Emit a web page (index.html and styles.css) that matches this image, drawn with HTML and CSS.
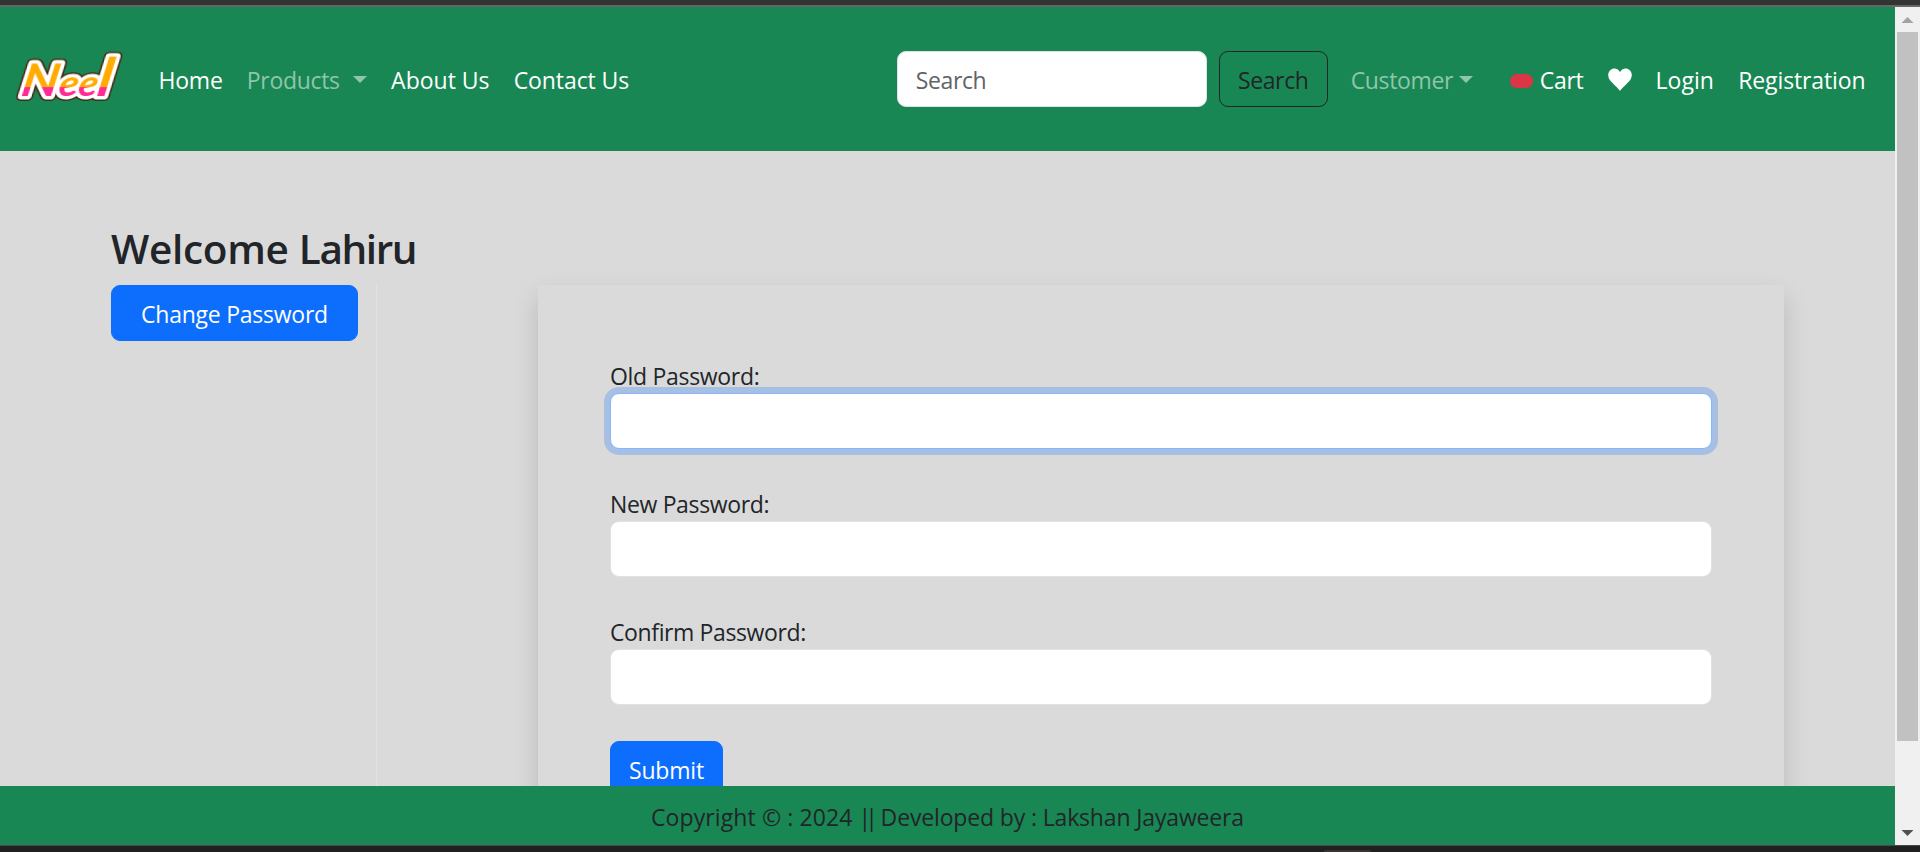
FILE: index.html
```html
<!DOCTYPE html>
<html lang="en">
<head>
<meta charset="utf-8">
<title>Change Password</title>
<link rel="stylesheet" href="styles.css">
</head>
<body>
<div class="window">
  <div class="strip-top"></div>
  <div class="viewport">
    <div class="page">
      <nav class="navbar">
        <svg class="logo" width="112" height="96" viewBox="0 0 112 96" role="img" aria-label="Neel">
          <defs>
            <linearGradient id="split" gradientUnits="userSpaceOnUse" x1="0" y1="0" x2="0" y2="96">
              <stop offset="0.593" stop-color="#ffab00"/>
              <stop offset="0.593" stop-color="#ff2a94"/>
            </linearGradient>
          </defs>
          <text class="logo-text" transform="translate(18.500 0) skewX(-10) scale(1.12 1)" x="-1" y="66" fill="url(#split)"><tspan font-size="46">N</tspan><tspan font-size="36" dx="0.5">ee</tspan><tspan font-size="53" dx="-0.5">l</tspan></text>
        </svg>
        <div class="links">
          <a class="link home">Home</a>
          <a class="link muted products">Products<span class="caret spaced"></span></a>
          <a class="link about">About Us</a>
          <a class="link contact">Contact Us</a>
        </div>
        <form class="search">
          <input class="control search-input" type="text" placeholder="Search">
          <button class="btn outline" type="button">Search</button>
        </form>
        <div class="links account">
          <a class="link muted customer">Customer<span class="caret"></span></a>
          <a class="link cart"><span class="badge"></span>Cart</a>
          <a class="link heart"><svg width="24" height="24" viewBox="0 0 24 24"><path fill="#fff" d="M12 23C10 19.800 4.500 15.600 2 12.300C-.5 9 -.3 4.500 2.200 2.200C5 -.4 9.700-.1 12 4C14.300-.1 19-.4 21.800 2.200C24.300 4.500 24.500 9 22 12.300C19.500 15.600 14 19.800 12 23Z"/></svg></a>
          <a class="link login">Login</a>
          <a class="link registration">Registration</a>
        </div>
      </nav>
      <main class="content">
        <h3 class="title"><span class="greeting">Welcome </span><span class="name">Lahiru</span></h3>
        <div class="columns">
          <aside class="side"><button class="btn primary change" type="button">Change Password</button></aside>
          <form class="card">
            <label class="label old">Old Password:</label>
            <div class="control focused"></div>
            <label class="label new">New Password:</label>
            <div class="control"></div>
            <label class="label confirm">Confirm Password:</label>
            <div class="control"></div>
            <button class="btn primary submit" type="button">Submit</button>
          </form>
        </div>
      </main>
      <footer class="footer"><span><span class="copyright">Copyright © : 2024 </span><span class="bars">||</span> Developed by : Lakshan Jayaweera</span></footer>
    </div>
    <div class="scrollbar">
      <svg class="arrow" width="25" height="25" viewBox="0 0 25 25"><path fill="#a3a3a3" d="M6.500 16L12.500 10L18.500 16Z"/></svg>
      <div class="thumb"></div>
      <svg class="arrow" width="25" height="25" viewBox="0 0 25 25"><path fill="#505050" d="M6.500 10L12.500 16L18.500 10Z"/></svg>
    </div>
  </div>
  <div class="strip-bottom"><div class="tab"></div></div>
</div>
</body>
</html>
```
FILE: styles.css
```css
* { box-sizing: border-box; }
body {
  margin: 0;
  font-family: "Open Sans", "Noto Sans", sans-serif;
  font-size: 23px;
  line-height: 36px;
  color: #212529;
  background: #dadada;
}
.window { width: 1920px; height: 852px; display: flex; flex-direction: column; overflow: hidden; }
.strip-top { height: 7px; flex: none; background: #333; border-bottom: 2px solid #666; }
.viewport { height: 838px; display: flex; }
.page { width: 1895px; display: flex; flex-direction: column; background: #dadada; }
.strip-bottom { flex: 1; background: #202020; border-top: 1px solid #484848; }
.tab { width: 47px; height: 2px; margin: 4px 0 0 1324px; background: #383434; border-radius: 3px 3px 0 0; }

/* Navigation */
.navbar { height: 144px; flex: none; display: flex; align-items: center; padding: 0 17.5px 0 14px; background: #198754; }
.logo { flex: none; margin: -3px 20.5px 0 0; }
.logo-text {
  font-family: Lato, sans-serif;
  font-weight: 700;
  font-style: italic;
  stroke: #fff;
  stroke-width: 7px;
  stroke-linejoin: round;
  paint-order: stroke;
  filter: drop-shadow(1px 0 0 #432712) drop-shadow(-1px 0 0 #432712) drop-shadow(0 1px 0 #432712) drop-shadow(0 -1px 0 #432712);
}
.links { display: flex; }
.link { flex: none; display: flex; align-items: center; height: 38px; padding-top: 2px; margin: 0 12px; color: #fff; white-space: nowrap; }
.muted { color: #8fc5ac; }
.caret { border: 7.2px solid transparent; border-top-color: currentColor; border-bottom: 0; margin-left: 6px; margin-top: -2px; }
.spaced { margin-left: 13px; }
.home { width: 64.3px; letter-spacing: -0.22px; }
.products { letter-spacing: -0.31px; width: 120.3px; }
.about { width: 98.6px; }
.contact { width: 115.3px; letter-spacing: -0.09px; }
.search { display: flex; gap: 12px; margin-left: auto; }
.search-input { width: 310px; }
.account { margin-left: 11px; }
.customer { letter-spacing: -0.36px; width: 123px; }
.cart { letter-spacing: -0.3px; margin-left: 24px; }
.badge { width: 23px; height: 14px; margin: 1px 7px 0 0; border-radius: 8px; background: #dc3545; }
.heart svg { position: relative; left: 0.6px; }
.login { width: 58.8px; letter-spacing: 0.08px; }
.registration { width: 127.3px; letter-spacing: -0.12px; }

/* Controls */
.control { height: 56px; background: #fff; border: 1px solid #dee2e6; border-radius: 9px; padding: 2px 18px 0; font: inherit; letter-spacing: -0.38px; }
.control::placeholder { color: #5f6468; opacity: 1; }
.focused { border-color: #86b7fe; box-shadow: 0 0 0 6px rgba(13, 110, 253, 0.25); }
.btn { height: 56px; padding: 2px 0 0; border: 1px solid; border-radius: 9px; font: inherit; }
.outline { width: 109px; background: transparent; border-color: #212529; color: #212529; letter-spacing: -0.38px; }
.primary { background: #0d6efd; border-color: #0d6efd; color: #fff; }

/* Account content */
.content { flex: 1; min-height: 0; overflow: hidden; padding: 73px 111px 0; }
.title { margin: 0 0 11px; font-size: 40.5px; font-weight: 600; line-height: 50px; }
.greeting { letter-spacing: -0.3px; }
.name { letter-spacing: -1.4px; }
.columns { display: flex; gap: 161px; height: 620px; }
.side { width: 266px; flex: none; border-right: 1px solid #e2e2e2; }
.change { width: 247px; letter-spacing: -0.24px; }
.card { width: 1246px; padding: 72px; box-shadow: 0 12px 24px rgba(0, 0, 0, 0.15); }
.card .control { margin-bottom: 36px; }
.label { display: block; height: 36px; padding-top: 1px; }
.old { letter-spacing: -0.31px; }
.new { letter-spacing: -0.35px; }
.confirm { letter-spacing: -0.38px; }
.submit { width: 113px; letter-spacing: -0.2px; }

.footer { height: 59px; flex: none; display: flex; justify-content: center; padding-top: 13px; background: #198754; letter-spacing: -0.15px; }
.copyright { letter-spacing: 0.1px; }
.bars { letter-spacing: -6px; margin-right: 3px; }

/* Scrollbar */
.scrollbar { width: 25px; flex: none; display: flex; flex-direction: column; background: #f0f0f0; }
.arrow { flex: none; }
.thumb { width: 21px; height: 709px; margin: 0 2px auto; background: #c1c1c1; }
```
